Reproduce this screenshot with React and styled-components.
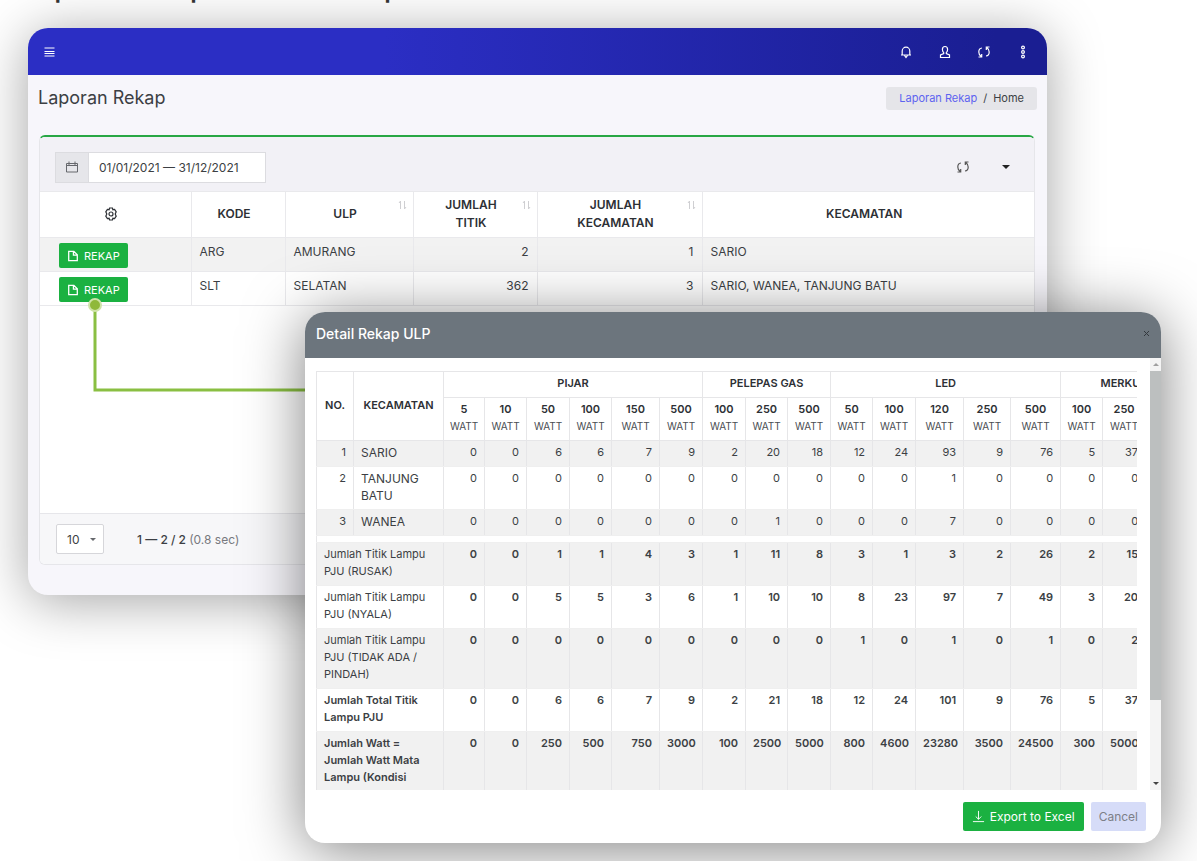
import React from "react";
import styled, { createGlobalStyle } from "styled-components";

const Global = createGlobalStyle`
  * { box-sizing: border-box; }
  body { margin: 0; background: #fff; color: #3c3f44; font-family: Inter, "Liberation Sans", sans-serif; font-size: 12px; line-height: 17px; }
  button, input, select { font: inherit; color: inherit; }
  table { border-collapse: collapse; table-layout: fixed; }
`;

const Page = styled.main`
  position: relative;
  min-height: 100vh;
  overflow: hidden;
`;

const PageHeading = styled.h1`
  margin: -23px 0 0;
  padding-left: 26px;
  height: 51px;
  font-size: 25px;
  line-height: 24px;
  font-weight: 600;
  white-space: nowrap;
  color: #333;
`;

const Window = styled.section`
  display: flex;
  flex-direction: column;
  margin: 0 150px 0 28px;
  min-height: 567px;
  border-radius: 20px;
  overflow: hidden;
  background: #f7f6fb;
  box-shadow: 0 6px 54px rgba(0, 0, 0, 0.36);
`;

const TopBar = styled.header`
  display: flex;
  align-items: center;
  justify-content: space-between;
  height: 47px;
  padding: 0 15px 0 12px;
  background: linear-gradient(90deg, #2b2ec4 35%, #1a1e92 95%);
`;

const Actions = styled.div`
  display: flex;
  align-items: center;
  gap: ${(p) => p.$gap}px;
`;

const IconButton = styled.button`
  display: flex;
  align-items: center;
  justify-content: center;
  width: 18px;
  height: 18px;
  padding: 0;
  border: 0;
  background: none;
  color: ${(p) => p.$color || "#fff"};
`;

const TitleRow = styled.div`
  display: flex;
  align-items: center;
  justify-content: space-between;
  height: 46px;
  padding: 0 10px;
`;

const Title = styled.h2`
  margin: 0;
  font-size: 18px;
  line-height: 22px;
  font-weight: 400;
`;

const Breadcrumb = styled.nav`
  display: flex;
  gap: 6px;
  padding: 3px 13px;
  border-radius: 3px;
  background: #e5e5e9;
  font-size: 11px;
  a { color: #5d63f0; text-decoration: none; }
`;

const Card = styled.div`
  display: flex;
  flex-direction: column;
  flex: 1;
  margin: 14px 12px 30px 11px;
  border: 1px solid #e6e6ea;
  border-top: 2px solid #28a745;
  border-radius: 6px;
  overflow: hidden;
  background: #fff;
`;

const Toolbar = styled.div`
  display: flex;
  align-items: center;
  justify-content: space-between;
  height: 54px;
  padding: 6px 19px 0 15px;
  background: #f2f1f6;
`;

const DateGroup = styled.label`
  display: flex;
  width: 211px;
  height: 31px;
  border: 1px solid #dcdce0;
  background: #fff;
`;

const Addon = styled.span`
  display: flex;
  align-items: center;
  justify-content: center;
  width: 33px;
  border-right: 1px solid #dcdce0;
  background: #e6e6ea;
  color: #66686d;
`;

const DateInput = styled.input`
  flex: 1;
  min-width: 0;
  padding: 0 10px;
  border: 0;
  background: transparent;
  outline: 0;
`;

const ListTable = styled.table`
  width: 100%;
  font-size: 12px;
  line-height: 18px;
  th { position: relative; height: 46px; padding: 3px 32px 5px 24px; border: 1px solid #e9e9ec; font-weight: 600; color: #2d3035; }
  th svg { vertical-align: middle; }
  td { height: 34px; padding: 5px 8px; border: 1px solid #e9e9ec; vertical-align: top; }
  th:first-child, td:first-child { border-left: 0; }
  th:last-child, td:last-child { border-right: 0; }
  tbody tr:nth-child(odd) { background: #f2f2f2; }
`;

const ActionCell = styled.td`
  && { padding: 5px 19px 2px; }
`;

const Num = styled.td`
  text-align: right;
`;

const SortIcon = styled.svg`
  position: absolute;
  top: 8px;
  right: 6px;
`;

const GreenButton = styled.button`
  display: flex;
  align-items: center;
  justify-content: center;
  gap: 5px;
  height: ${(p) => (p.$large ? 29 : 25)}px;
  padding: 0 ${(p) => (p.$large ? 9 : 8)}px;
  border: 0;
  border-radius: 2px;
  background: #1bb141;
  color: #fff;
  font-size: ${(p) => (p.$large ? 12 : 11)}px;
  white-space: nowrap;
`;

const CardFooter = styled.footer`
  display: flex;
  align-items: center;
  gap: 33px;
  height: 51px;
  margin-top: auto;
  padding: 0 16px;
  border-top: 1px solid #e6e6ea;
  background: #f7f7f9;
  font-weight: 500;
  small { font-size: 12px; font-weight: 400; color: #77797e; }
`;

const SelectWrap = styled.label`
  display: grid;
  align-items: center;
  width: 48px;
  > * { grid-area: 1 / 1; }
  svg { justify-self: end; margin-right: 8px; color: #66686d; pointer-events: none; }
`;

const Select = styled.select`
  appearance: none;
  width: 100%;
  height: 30px;
  padding: 0 10px;
  border: 1px solid #d6d6da;
  border-radius: 2px;
  background: #fff;
  font-weight: 400;
`;

const Connector = styled.svg`
  position: absolute;
  left: 86px;
  top: 296px;
`;

const Modal = styled.section`
  position: absolute;
  left: 305px;
  right: 36px;
  top: 312px;
  display: flex;
  flex-direction: column;
  border-radius: 20px;
  overflow: hidden;
  background: #fff;
  box-shadow: 0 6px 60px rgba(0, 0, 0, 0.5);
`;

const ModalHeader = styled.header`
  display: flex;
  align-items: center;
  justify-content: space-between;
  height: 46px;
  padding: 0 6px 4px 11px;
  background: #6c757d;
  h3 { margin: 0; font-size: 14px; font-weight: 500; color: #fff; }
`;

const ModalBody = styled.div`
  display: flex;
  height: 432px;
`;

const TableClip = styled.div`
  flex: 1;
  min-width: 0;
  margin: 13px 13px 0 11px;
  overflow: hidden;
`;

const ScrollBar = styled.div`
  display: flex;
  flex-direction: column;
  align-items: center;
  width: 11px;
  background: #f4f4f4;
`;

const ScrollArrow = styled.span`
  display: flex;
  align-items: center;
  justify-content: center;
  height: 13px;
  color: ${(p) => p.$color};
`;

const ScrollThumb = styled.span`
  width: 100%;
  height: 329px;
  margin-bottom: auto;
  background: #bcbfbf;
`;

const DetailTable = styled.table`
  width: 874px;
  font-size: 11px;
  th { padding: 3px 0 5px; border: 1px solid #e6e6e8; font-weight: 600; color: #2d3035; text-align: center; }
  th small { display: block; font-size: 10px; font-weight: 400; color: #4a4d52; }
  td { padding: 3px 7px 5px; border: 1px solid #e6e6e8; border-bottom-color: #efefef; vertical-align: top; text-align: right; white-space: nowrap; }
`;

const DetailRow = styled.tr`
  background: ${(p) => (p.$shade ? "#f1f1f1" : "#fff")};
  font-weight: ${(p) => (p.$bold ? 600 : 400)};
`;

const LabelCell = styled.td`
  && { text-align: left; white-space: normal; font-size: ${(p) => p.$size}px; font-weight: ${(p) => (p.$bold ? 600 : 400)}; }
`;

const Spacer = styled.tr`
  && td { height: 7px; padding: 0; border-bottom: 1px solid #efefef; }
`;

const ModalFooter = styled.footer`
  display: flex;
  align-items: center;
  justify-content: flex-end;
  gap: 7px;
  height: 53px;
  padding: 0 15px;
`;

const CancelButton = styled.button`
  height: 29px;
  padding: 0 8px;
  border: 0;
  border-radius: 2px;
  background: #d6dcf8;
  color: #7d7f87;
`;

const Line = ({ size = 14, children, ...rest }) => (
  <svg width={size} height={size} viewBox="0 0 14 14" fill="none" stroke="currentColor" strokeWidth="1" aria-hidden="true" {...rest}>
    {children}
  </svg>
);
const MenuIcon = () => <Line><path d="M2.500 3h10M2.500 6.500h10M2.500 8.500h10M2.500 11h10" /></Line>;
const Bell = () => <Line strokeWidth="1.200"><path d="M2 10h10M3.200 10V6a3.800 3.800 0 0 1 7.600 0v4M5.500 10.500 7 12.500 8.500 10.500" /></Line>;
const User = () => <Line strokeWidth="1.200"><path d="M7 1.500c-1.800 0-2.600 1.300-2.600 3 0 1.500.6 2.500 1.300 3.200v.8L2.500 10v2.500h9V10L8.300 8.500v-.8C9 7 9.600 6 9.600 4.500c0-1.700-.8-3-2.600-3z" /></Line>;
const Refresh = () => <Line strokeWidth="1.200"><path d="M5 3C3 3.200 1.800 5 1.800 7c0 1.800.8 3.300 2.200 4.300M1.500 12h3.200V9M9 11c2-.2 3.200-2 3.200-4 0-1.800-.8-3.300-2.200-4.300M12.500 2H9.300v3" /></Line>;
const Dots = () => <Line strokeWidth="1.200"><circle cx="7" cy="2.500" r="1.400" /><circle cx="7" cy="7" r="1.400" /><circle cx="7" cy="11.500" r="1.400" /></Line>;
const Calendar = () => <Line><path d="M1.500 3.500h11v8.500h-11zM4 1.500v3.500M10 1.500v3.500M1.500 5.500h11" /></Line>;
const Gear = () => <Line strokeWidth="1.200"><path d="M5.600 1h2.800l.5 1.700 1.700-.3 1.600 2.400L11.200 7l1 2.200-1.600 2.400-1.700-.3L8.400 13H5.600l-.5-1.700-1.700.3-1.600-2.400L2.800 7l-1-2.200 1.600-2.400 1.700.3z" /><circle cx="7" cy="7" r="2" /></Line>;
const Doc = () => <Line size={12} strokeWidth="1.500"><path d="M2 1.500h6L12 5.500v7H2zM7.500 1.500V6H12" /></Line>;
const Download = () => <Line size={13}><path d="M7 1v9M4 7l3 3 3-3M1 12.500h12" /></Line>;
const Caret = ({ w = 8, up }) => (
  <svg width={w} height={w / 2} viewBox="0 0 8 4" fill="currentColor" aria-hidden="true"><path d={up ? "M0 4h8L4 0z" : "M0 0h8L4 4z"} /></svg>
);
const Sort = () => (
  <SortIcon width="9" height="10" viewBox="0 0 9 10" fill="none" stroke="#cfcfd2" aria-hidden="true"><path d="M2.500 9V1L1 3M6.500 1v8L8 7" /></SortIcon>
);

const list = [
  { kode: "ARG", ulp: "AMURANG", titik: 2, count: 1, kecamatan: "SARIO" },
  { kode: "SLT", ulp: "SELATAN", titik: 362, count: 3, kecamatan: "SARIO, WANEA, TANJUNG BATU" },
];

const groups = [["PIJAR", 6], ["PELEPAS GAS", 3], ["LED", 5], ["MERKURI", 3]];
const watts = [5, 10, 50, 100, 150, 500, 100, 250, 500, 50, 100, 120, 250, 500, 100, 250, 500];
const widths = [37, 90, 41, 42, 43, 42, 48, 43, 43, 42, 43, 42, 43, 48, 47, 50, 42, 43, 45];

const districts = [
  ["SARIO", [0, 0, 6, 6, 7, 9, 2, 20, 18, 12, 24, 93, 9, 76, 5, 37]],
  ["TANJUNG BATU", [0, 0, 0, 0, 0, 0, 0, 0, 0, 0, 0, 1, 0, 0, 0, 0]],
  ["WANEA", [0, 0, 0, 0, 0, 0, 0, 1, 0, 0, 0, 7, 0, 0, 0, 0]],
];
const totals = [
  ["Jumlah Titik Lampu PJU (RUSAK)", [0, 0, 1, 1, 4, 3, 1, 11, 8, 3, 1, 3, 2, 26, 2, 15], false],
  ["Jumlah Titik Lampu PJU (NYALA)", [0, 0, 5, 5, 3, 6, 1, 10, 10, 8, 23, 97, 7, 49, 3, 20], false],
  ["Jumlah Titik Lampu PJU (TIDAK ADA / PINDAH)", [0, 0, 0, 0, 0, 0, 0, 0, 0, 1, 0, 1, 0, 1, 0, 2], false],
  ["Jumlah Total Titik Lampu PJU", [0, 0, 6, 6, 7, 9, 2, 21, 18, 12, 24, 101, 9, 76, 5, 37], true],
  ["Jumlah Watt = Jumlah Watt Mata Lampu (Kondisi", [0, 0, 250, 500, 750, 3000, 100, 2500, 5000, 800, 4600, 23280, 3500, 24500, 300, 5000], true],
];

export default function App() {
  return (
    <Page>
      <Global />
      <PageHeading>Laporan Rekap Data Titik Lampu</PageHeading>
      <Window>
        <TopBar>
          <IconButton aria-label="Menu"><MenuIcon /></IconButton>
          <Actions $gap={21}>
            <IconButton aria-label="Notifikasi"><Bell /></IconButton>
            <IconButton aria-label="Akun"><User /></IconButton>
            <IconButton aria-label="Muat ulang"><Refresh /></IconButton>
            <IconButton aria-label="Lainnya"><Dots /></IconButton>
          </Actions>
        </TopBar>
        <TitleRow>
          <Title>Laporan Rekap</Title>
          <Breadcrumb><a href="#rekap">Laporan Rekap</a><span>/</span><span>Home</span></Breadcrumb>
        </TitleRow>
        <Card>
          <Toolbar>
            <DateGroup>
              <Addon><Calendar /></Addon>
              <DateInput aria-label="Periode" defaultValue="01/01/2021 — 31/12/2021" />
            </DateGroup>
            <Actions $gap={25}>
              <IconButton $color="#555" aria-label="Muat ulang tabel"><Refresh /></IconButton>
              <IconButton $color="#222" aria-label="Opsi"><Caret /></IconButton>
            </Actions>
          </Toolbar>
          <ListTable>
            <colgroup>
              <col width="151" /><col width="94" /><col width="128" /><col width="124" /><col width="165" /><col />
            </colgroup>
            <thead>
              <tr>
                <th aria-label="Aksi"><Gear /></th>
                <th>KODE</th>
                <th>ULP<Sort /></th>
                <th>JUMLAH TITIK<Sort /></th>
                <th>JUMLAH KECAMATAN<Sort /></th>
                <th>KECAMATAN</th>
              </tr>
            </thead>
            <tbody>
              {list.map((r) => (
                <tr key={r.kode}>
                  <ActionCell><GreenButton><Doc />REKAP</GreenButton></ActionCell>
                  <td>{r.kode}</td>
                  <td>{r.ulp}</td>
                  <Num>{r.titik}</Num>
                  <Num>{r.count}</Num>
                  <td>{r.kecamatan}</td>
                </tr>
              ))}
            </tbody>
          </ListTable>
          <CardFooter>
            <SelectWrap>
              <Select aria-label="Baris per halaman" defaultValue="10"><option>10</option><option>25</option></Select>
              <Caret w={6} />
            </SelectWrap>
            <span>1 — 2 / 2 <small>(0.8 sec)</small></span>
          </CardFooter>
        </Card>
      </Window>

      <Connector width="220" height="98" viewBox="0 0 220 98" aria-hidden="true">
        <path d="M9 9v85h211" fill="none" stroke="#8abf42" strokeWidth="3" />
        <circle cx="9" cy="9" r="6" fill="#8fb83a" stroke="#cfe3a8" strokeWidth="2" />
      </Connector>

      <Modal role="dialog" aria-label="Detail Rekap ULP">
        <ModalHeader>
          <h3>Detail Rekap ULP</h3>
          <IconButton $color="#33383d" aria-label="Tutup"><Line size={7}><path d="M2 2l10 10M12 2L2 12" strokeWidth="2" /></Line></IconButton>
        </ModalHeader>
        <ModalBody>
          <TableClip>
            <DetailTable>
              <colgroup>{widths.map((w, i) => <col key={i} width={w} />)}</colgroup>
              <thead>
                <tr>
                  <th rowSpan={2}>NO.</th>
                  <th rowSpan={2}>KECAMATAN</th>
                  {groups.map(([name, span]) => <th key={name} colSpan={span}>{name}</th>)}
                </tr>
                <tr>{watts.map((w, i) => <th key={i}>{w}<small>WATT</small></th>)}</tr>
              </thead>
              <tbody>
                {districts.map(([name, values], r) => (
                  <DetailRow key={name} $shade={r % 2 === 0}>
                    <td>{r + 1}</td>
                    <LabelCell $size={12}>{name}</LabelCell>
                    {values.map((v, i) => <td key={i}>{v}</td>)}
                  </DetailRow>
                ))}
                <Spacer><td colSpan={19} /></Spacer>
              </tbody>
              <tfoot>
                {totals.map(([name, values, bold], r) => (
                  <DetailRow key={name} $shade={r % 2 === 0} $bold>
                    <LabelCell colSpan={2} $size={11} $bold={bold}>{name}</LabelCell>
                    {values.map((v, i) => <td key={i}>{v}</td>)}
                  </DetailRow>
                ))}
              </tfoot>
            </DetailTable>
          </TableClip>
          <ScrollBar aria-hidden="true">
            <ScrollArrow $color="#a0a0a0"><Caret w={6} up /></ScrollArrow>
            <ScrollThumb />
            <ScrollArrow $color="#444"><Caret w={6} /></ScrollArrow>
          </ScrollBar>
        </ModalBody>
        <ModalFooter>
          <GreenButton $large><Download />Export to Excel</GreenButton>
          <CancelButton>Cancel</CancelButton>
        </ModalFooter>
      </Modal>
    </Page>
  );
}
